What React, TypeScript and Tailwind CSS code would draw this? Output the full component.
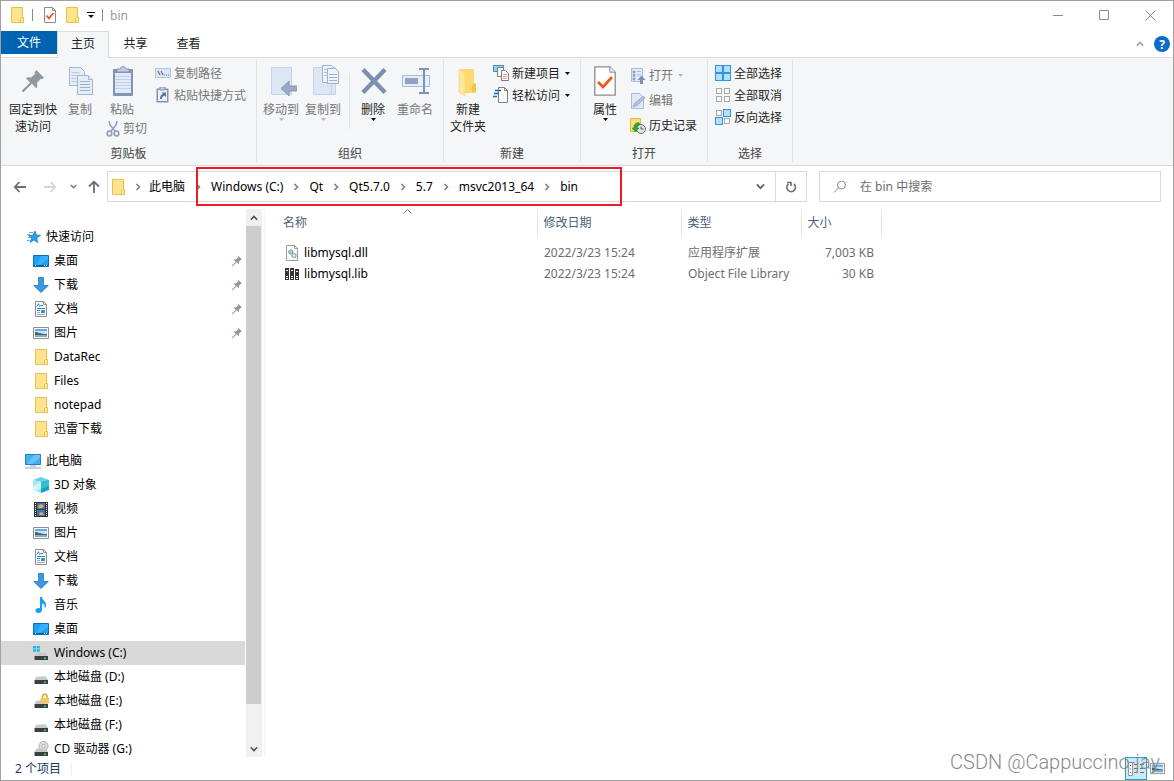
import React from 'react';

type IconProps = { className?: string };

/* ---------- shared icons ---------- */

function FolderIcon({ className = 'w-4 h-4' }: IconProps) {
  return (
    <svg viewBox="0 0 16 16" className={className}>
      <path d="M2.500.5h11v10h1v5h-12z" fill="#ffe48f" stroke="#e8c04a" />
      <path d="M11.500 15.500v-4l1-1h2v5z" fill="#ffe9a6" stroke="#e8c04a" />
    </svg>
  );
}

function PinIcon({ className = 'w-3 h-3' }: IconProps) {
  return (
    <svg viewBox="0 0 20 20" className={className}>
      <path d="M13 0l7 7-2 1.500-1-.5-3.500 4c.7 1.800.5 3.500-.5 4.500l-4-4L1.500 20 0 20 .5 18 7.500 11.500 3.500 7.500c1.200-1 3-1.200 4.500-.5l4-3.500-.5-1.500z" fill="#8f99a3" />
    </svg>
  );
}

function PageCheckIcon({ className = 'w-4 h-4' }: IconProps) {
  return (
    <svg viewBox="0 0 22 30" className={className}>
      <path d="M.8.800h15L21.200 6.200v23H.8z" fill="#fff" stroke="#8c8c8c" strokeWidth="1.300" />
      <path d="M15.800.800v5.400h5.400" fill="#eee" stroke="#8c8c8c" />
      <path d="M4 16l5 5 9-10" fill="none" stroke="#f0591c" strokeWidth="2.800" />
    </svg>
  );
}

function SmallPageCheckIcon() {
  return (
    <svg viewBox="0 0 16 16" className="w-4 h-4">
      <path d="M2.500.5h8l3 3v12h-11z" fill="#fff" stroke="#8c8c8c" />
      <path d="M10.500.5v3h3" fill="none" stroke="#8c8c8c" />
      <path d="M4.500 8.500l2.500 3 4.500-5.500" fill="none" stroke="#e8501c" strokeWidth="1.700" />
    </svg>
  );
}

function Caret({ className = 'text-black' }: IconProps) {
  return (
    <svg viewBox="0 0 5 3" className={`w-[5px] h-[3px] shrink-0 ${className}`}>
      <path d="M0 0h5L2.500 3z" fill="currentColor" />
    </svg>
  );
}

function Chevron({ d, className = 'w-2 h-2' }: IconProps & { d: string }) {
  return (
    <svg viewBox="0 0 8 8" className={className} fill="none" stroke="currentColor" strokeWidth="1.600">
      <path d={d} />
    </svg>
  );
}

const RIGHT = 'M2.500 1l3 3-3 3';
const DOWN = 'M.8 2.200L4 5.500l3.200-3.300';
const UP = 'M.8 5.800L4 2.500l3.200 3.300';

/* ---------- ribbon icons ---------- */

function CopyIcon() {
  return (
    <svg viewBox="0 0 32 32" className="w-8 h-8" fill="#e4ecf7" stroke="#a3b5d1">
      <path d="M5.500 2.500h11l4 4v14h-15z" />
      <path d="M7.500 7.500h8M7.500 10.500h8M7.500 13.500h8M7.500 16.500h8" stroke="#bccbe2" />
      <path d="M13.500 10.500h11l4 4v15h-15z" />
      <path d="M24.500 10.500v4h4" />
      <path d="M16 16.500h10M16 19.500h10M16 22.500h10M16 25.500h10" stroke="#9db0cf" />
    </svg>
  );
}

function PasteIcon() {
  return (
    <svg viewBox="0 0 32 32" className="w-8 h-8">
      <rect x="7" y="4" width="20" height="27" rx="1" fill="#8494b5" />
      <path d="M9 8h16v20H9z" fill="#e2eaf7" />
      <path d="M9 11.500h16M9 14.500h16M9 17.500h16M9 20.500h16M9 23.500h16" stroke="#c3d0e6" />
      <path d="M11 7V4h3.500a2.500 2.500 0 015 0H23v3z" fill="#c6cfdf" stroke="#8494b5" />
    </svg>
  );
}

function ScissorsIcon() {
  return (
    <svg viewBox="0 0 14 16" className="w-[14px] h-4 shrink-0" fill="none" stroke="#8d9dbb">
      <path d="M3 0l1 4 5 6M11 0l-1 4-5 6" strokeWidth="1.500" />
      <ellipse cx="3.500" cy="12.500" rx="2.300" ry="2.500" strokeWidth="1.600" />
      <ellipse cx="10.500" cy="12.500" rx="2.300" ry="2.500" strokeWidth="1.600" />
    </svg>
  );
}

function CopyPathIcon() {
  return (
    <svg viewBox="0 0 16 16" className="w-4 h-4 shrink-0">
      <path d="M.5 3.500h15v9H.5z" fill="#dce7f6" stroke="#b6c5dd" />
      <path d="M3 6l2 4M6 6l2 4M9 10h1M11 10h1M13 10h1" stroke="#62789f" strokeWidth="1.200" />
    </svg>
  );
}

function PasteShortcutIcon() {
  return (
    <svg viewBox="0 0 16 16" className="w-4 h-4 shrink-0">
      <path d="M1.500 1.500h12v14h-12z" fill="#8393b3" />
      <path d="M3 3h9v11H3z" fill="#eaf0fa" />
      <path d="M5 0h5v3H5z" fill="#c8d1e1" stroke="#8393b3" />
      <path d="M5 12c0-3 1-4.500 3-5L6.500 5.500H11V10L9.500 8.500C8 9 6.800 10 7 12z" fill="#5c7196" />
    </svg>
  );
}

function MoveToIcon() {
  return (
    <svg viewBox="0 0 32 32" className="w-8 h-8">
      <path d="M6.500 2.500h20v27h-20z" fill="#dce6f5" stroke="#c6d3e8" />
      <path d="M24.500 16v13" stroke="#c6d3e8" />
      <path d="M16 23.500l8-7.500v5h8v5h-8v5z" fill="#9aaac6" stroke="#8799b9" />
    </svg>
  );
}

function CopyToIcon() {
  return (
    <svg viewBox="0 0 32 32" className="w-8 h-8">
      <path d="M6.500 2.500h22v27h-22z" fill="#dce6f5" stroke="#c6d3e8" />
      <path d="M24.500 20v9" stroke="#c6d3e8" />
      <path d="M15.500.5h9l3 3v14h-12z" fill="#eef3fb" stroke="#9fb1cf" />
      <path d="M17 4.500h7M17 7.500h7M17 10.500h7" stroke="#b3c2db" />
      <path d="M20.500 3.500h8l3 3v12h-11z" fill="#eef3fb" stroke="#9fb1cf" />
      <path d="M22 9.500h8M22 12.500h8M22 15.500h8" stroke="#9fb1cf" />
    </svg>
  );
}

function DeleteIcon() {
  return (
    <svg viewBox="0 0 32 32" className="w-8 h-8">
      <path d="M6 4.500l22 23M28 4.500L6 27.500" stroke="#7d8fb0" strokeWidth="4.500" />
    </svg>
  );
}

function RenameIcon() {
  return (
    <svg viewBox="0 0 32 32" className="w-8 h-8">
      <path d="M3.500 10.500h27v11h-27z" fill="#e6eefa" stroke="#a9bbd8" />
      <path d="M6 13h13v6H6z" fill="#91a3c3" />
      <path d="M20 4h4l1 1 1-1h4M20 28h4l1-1 1 1h4M25 5v22" fill="none" stroke="#8093b5" strokeWidth="2" />
    </svg>
  );
}

function NewFolderIcon() {
  return (
    <svg viewBox="0 0 32 32" className="w-8 h-8">
      <path d="M8 4h14v18h2v6H11z" fill="#ffd96f" />
      <path d="M22 18l2 1v8h-4v-6z" fill="#f4c44c" />
      <path d="M7 4l6 5v22l-6-4z" fill="#ffe79c" stroke="#f6d06b" strokeWidth=".6" />
    </svg>
  );
}

function NewItemIcon() {
  return (
    <svg viewBox="0 0 16 16" className="w-4 h-4 shrink-0">
      <path d="M.5.5h10v6H.5z" fill="#8fd3f2" stroke="#4c8fb5" />
      <path d="M4.500 2.500h6v9h-6z" fill="#fff" stroke="#7d7d7d" />
      <path d="M8.500 5.500h4l3 3v7h-7z" fill="#fff" stroke="#7d7d7d" />
      <path d="M10 9.500h4M10 11.500h4M10 13.500h4" stroke="#e29a8c" />
    </svg>
  );
}

function EasyAccessIcon() {
  return (
    <svg viewBox="0 0 16 16" className="w-4 h-4 shrink-0">
      <path d="M5.500.5h6l3 3v12h-9z" fill="#fff" stroke="#808080" />
      <path d="M11.500.5v3h3" fill="none" stroke="#808080" />
      <path d="M2 3.500h6M1 6.500h5M0 9.500h4" stroke="#1a6fb5" strokeWidth="1.300" />
    </svg>
  );
}

function OpenIcon() {
  return (
    <svg viewBox="0 0 16 16" className="w-4 h-4 shrink-0">
      <path d="M1.500.5h11v13h-11z" fill="#e3ebf8" stroke="#a9bbd8" />
      <path d="M3 3h2v2H3zM3 6.500h2v2H3zM3 10h2v2H3zM6.500 3.500H11M6.500 7H11" fill="#8ea2c5" stroke="#8ea2c5" strokeWidth=".7" />
      <path d="M10 16v-4H7.500L11.500 7.500l4 4.500H13v4z" fill="#7d91b5" />
    </svg>
  );
}

function EditIcon() {
  return (
    <svg viewBox="0 0 16 16" className="w-4 h-4 shrink-0">
      <path d="M1.500.5h8l4 4v11h-12z" fill="#dfe8f6" stroke="#a9bbd8" />
      <path d="M3 14l2-4 8.500-7 1.500 2-8 7.500z" fill="#b4c3dc" stroke="#8ea2c5" strokeWidth=".8" />
    </svg>
  );
}

function HistoryIcon() {
  return (
    <svg viewBox="0 0 16 16" className="w-4 h-4 shrink-0">
      <path d="M.5.5h10v13h-10z" fill="#ffe07a" stroke="#e6b93c" />
      <circle cx="11" cy="11" r="4.500" fill="#e4e4e4" stroke="#6f6f6f" />
      <path d="M11 8.500V11h2.500" fill="none" stroke="#555" />
      <path d="M9 4.500C5 5 3.500 7 4 10H2l3.500 4L9 10H7c0-2 .8-3 3-3.500z" fill="#27a844" stroke="#14822e" strokeWidth=".5" />
    </svg>
  );
}

const SQUARES = [
  [0, 0],
  [8, 0],
  [0, 8],
  [8, 8],
];

function SelectionIcon({ on }: { on: boolean[] }) {
  return (
    <svg viewBox="0 0 16 16" className="w-4 h-4 shrink-0">
      {SQUARES.map(([x, y], i) =>
        on[i] ? (
          <rect key={i} x={x + 0.5} y={y + 0.5} width="7" height="7" fill="#b5defb" stroke="#2e95e6" />
        ) : (
          <rect key={i} x={x + 1.5} y={y + 1.5} width="5" height="5" fill="#fff" stroke="#a8a8a8" />
        )
      )}
    </svg>
  );
}

/* ---------- navigation icons ---------- */

function StarIcon() {
  return (
    <svg viewBox="0 0 16 16" className="w-4 h-4">
      <path d="M10 2l1.200 4 4.300.300-3.700 2.600.8 4.600-3.600-2.500-3.800 2.500 1.500-4.500L3.500 6.500l4.300-.2z" fill="#2f9be8" stroke="#1b7fc9" strokeWidth=".8" />
      <path d="M4 3.500h4M2 5.500h3M3 8.500h3M2 11.500h3" stroke="#5bb4ef" />
    </svg>
  );
}

function DesktopIcon() {
  return (
    <svg viewBox="0 0 16 16" className="w-4 h-4">
      <path d="M.5 2.500h15v11H.5z" fill="#1ba1fb" stroke="#0b6fae" />
      <path d="M8 3h7v3L6 12.500H3z" fill="#46b5ff" opacity=".7" />
      <path d="M1 12.500h14" stroke="#0a5f99" />
      <path d="M2 12.500h1M11 12.500h1M13 12.500h1" stroke="#fff" />
    </svg>
  );
}

function DownloadIcon() {
  return (
    <svg viewBox="0 0 16 16" className="w-4 h-4">
      <path d="M5.500.5h5v8h4.800L8 15.500.7 8.500h4.800z" fill="#3c96e4" stroke="#2778c4" strokeWidth=".8" />
    </svg>
  );
}

function DocumentIcon() {
  return (
    <svg viewBox="0 0 16 16" className="w-4 h-4">
      <path d="M2.500.5h8l3 3v12h-11z" fill="#fff" stroke="#8c8c8c" />
      <path d="M10.500.5v3h3" fill="none" stroke="#8c8c8c" />
      <path d="M4 5.500l1.500-3 1 3M7 4.500h3M4 7.500h8M4 9.500h3" fill="none" stroke="#2a86d1" />
      <path d="M8 9h4v3H8z" fill="#3d8fc4" />
      <path d="M4 11.500h3M4 13.500h8" stroke="#9aa7b3" />
    </svg>
  );
}

function PictureIcon({ className = 'w-4 h-4' }: IconProps) {
  return (
    <svg viewBox="0 0 16 16" className={className}>
      <path d="M.5 2.500h15v11H.5z" fill="#fff" stroke="#8f8f8f" />
      <path d="M2 4h12v8H2z" fill="#c6e2f8" />
      <path d="M2 4h12v2H2z" fill="#6aa6e6" />
      <path d="M2 7c3 0 5 2 12 2v1H2z" fill="#3d6b63" />
      <path d="M2 10h12v2H2z" fill="#7fa9c4" />
    </svg>
  );
}

function ComputerIcon() {
  return (
    <svg viewBox="0 0 16 16" className="w-4 h-4">
      <path d="M.5 1.500h15v10H.5z" fill="#3fb1f7" stroke="#2b7fb8" />
      <path d="M9 2h6v2L7 11H2z" fill="#7accff" opacity=".7" />
      <path d="M5 13h6M0 15h16" stroke="#8ea3b5" strokeWidth="1.200" />
    </svg>
  );
}

function CubeIcon() {
  return (
    <svg viewBox="0 0 16 16" className="w-4 h-4">
      <path d="M0 3l8-3 8 3-8 2z" fill="#5fd6e6" />
      <path d="M0 3l8 2v11l-8-3z" fill="#9ee9ef" />
      <path d="M8 5l8-2v10l-8 3z" fill="#0ea5c4" />
      <path d="M8 5l8-2v6L8 12z" fill="#37bdd3" />
      <path d="M0 9l8-4v6l-5 3-3-1z" fill="#d4f5f5" />
    </svg>
  );
}

function VideoIcon() {
  return (
    <svg viewBox="0 0 16 16" className="w-4 h-4">
      <path d="M1 1h14v15H1z" fill="#333" />
      <path d="M2.500 2v14M13.500 2v14" stroke="#fff" strokeDasharray="1 1" />
      <path d="M4 2h8v6H4zM4 9h8v6H4z" fill="#3f6fd0" />
      <path d="M5 5l3-2 3 2-2 2H6zM6 12l3-1 2 3H7z" fill="#e8b23a" />
      <path d="M4 7h3v1H4zM8 9h3v1H8z" fill="#4f9a4a" />
    </svg>
  );
}

function MusicIcon() {
  return (
    <svg viewBox="0 0 16 16" className="w-4 h-4">
      <path d="M7 0h2c0 3 4 4 4 8 0 1.500-.5 2.500-1.200 3.500C12 8.500 11 7 9 6.500V13c0 1.800-1.500 3-3.500 3S2.300 15 2.300 13.600 4 11 5.500 11c.6 0 1 0 1.500.3z" fill="#16a0f5" />
    </svg>
  );
}

function DriveIcon({ kind }: { kind?: 'windows' | 'locked' | 'cd' }) {
  return (
    <svg viewBox="0 0 16 16" className="w-4 h-4">
      {kind === 'cd' && (
        <>
          <circle cx="10.500" cy="5" r="4.500" fill="#e3e3e3" stroke="#9a9a9a" strokeWidth=".8" />
          <circle cx="10.500" cy="5" r="1.700" fill="#fff" stroke="#9a9a9a" strokeWidth=".8" />
        </>
      )}
      <path d="M3.500 7.500h9.500l2 3.500H1.500z" fill="#c9c9c9" />
      <path d="M1.500 11h13.500v4H1.500z" fill="#3a3f42" />
      <path d="M11 12.500h2v1.500h-2z" fill="#3ddc4b" />
      {kind === 'windows' && <path d="M0 1h3v2.500H0zM3.800 1h3v2.500h-3zM0 4.300h3v2.500H0zM3.800 4.300h3v2.500h-3z" fill="#12b5ee" />}
      {kind === 'locked' && (
        <>
          <path d="M9.500 5V3.500a2.300 2.300 0 014.600 0V5" fill="none" stroke="#d9a93a" strokeWidth="1.500" />
          <path d="M7.500 5H16v5H7.500z" fill="#f6c95a" />
        </>
      )}
    </svg>
  );
}

/* ---------- ribbon ---------- */

function RibbonGroup({ label, className, children }: { label: string; className: string; children: React.ReactNode }) {
  return (
    <section aria-label={label} className={`flex flex-col shrink-0 border-r border-[#e1e2e4] pt-[2px] ${className}`}>
      <div className="flex flex-1 items-start">{children}</div>
      <div className="text-center text-[#444]">{label}</div>
    </section>
  );
}

interface BigButtonProps {
  icon: React.ReactNode;
  lines: string[];
  disabled?: boolean;
  caret?: boolean;
  className?: string;
}

function BigButton({ icon, lines, disabled, caret, className = 'w-[42px]' }: BigButtonProps) {
  return (
    <button
      type="button"
      disabled={disabled}
      className={`flex flex-col items-center shrink-0 pt-[3px] whitespace-nowrap ${disabled ? 'text-[#767676]' : 'text-[#1e1e1e]'} ${className}`}
    >
      <span className="flex items-center justify-center w-8 h-8 mb-1">{icon}</span>
      {lines.map((line) => (
        <span key={line}>{line}</span>
      ))}
      {caret && <Caret className={disabled ? 'text-[#b5b5b5]' : 'text-black'} />}
    </button>
  );
}

interface SmallButtonProps {
  icon: React.ReactNode;
  label: string;
  disabled?: boolean;
  caret?: boolean;
  className?: string;
}

function SmallButton({ icon, label, disabled, caret, className = 'h-[22px] gap-[3px]' }: SmallButtonProps) {
  return (
    <button
      type="button"
      disabled={disabled}
      className={`flex items-center whitespace-nowrap ${disabled ? 'text-[#767676]' : 'text-[#1e1e1e]'} ${className}`}
    >
      {icon}
      <span>{label}</span>
      {caret && (
        <span className="pl-[2px]">
          <Caret className={disabled ? 'text-[#b5b5b5]' : 'text-black'} />
        </span>
      )}
    </button>
  );
}

function Ribbon() {
  return (
    <div className="flex shrink-0 h-[109px] bg-[#f5f6f7] border-y border-[#dadbdc] pt-[2px] pb-[3px]">
      <RibbonGroup label="剪贴板" className="w-[256px]">
        <BigButton icon={<PinIcon className="w-[22px] h-[22px]" />} lines={['固定到快', '速访问']} className="ml-[7px] w-[50px]" />
        <BigButton icon={<CopyIcon />} lines={['复制']} disabled className="ml-[2px] w-10" />
        <div className="flex flex-col items-start w-[51px]">
          <BigButton icon={<PasteIcon />} lines={['粘贴']} disabled className="ml-[2px] w-10" />
          <SmallButton icon={<ScissorsIcon />} label="剪切" disabled className="ml-[6px] h-[21px] gap-[3px]" />
        </div>
        <div className="pl-1">
          <SmallButton icon={<CopyPathIcon />} label="复制路径" disabled />
          <SmallButton icon={<PasteShortcutIcon />} label="粘贴快捷方式" disabled />
        </div>
      </RibbonGroup>

      <RibbonGroup label="组织" className="w-[187px]">
        <BigButton icon={<MoveToIcon />} lines={['移动到']} disabled caret className="ml-[3px] w-[42px]" />
        <BigButton icon={<CopyToIcon />} lines={['复制到']} disabled caret />
        <div className="w-px h-[56px] mt-[11px] ml-[5px] mr-[2px] bg-[#e1e2e4]" />
        <BigButton icon={<DeleteIcon />} lines={['删除']} caret />
        <BigButton icon={<RenameIcon />} lines={['重命名']} disabled />
      </RibbonGroup>

      <RibbonGroup label="新建" className="w-[137px]">
        <BigButton icon={<NewFolderIcon />} lines={['新建', '文件夹']} className="ml-[3px] w-[42px]" />
        <div className="pl-1">
          <SmallButton icon={<NewItemIcon />} label="新建项目" caret />
          <SmallButton icon={<EasyAccessIcon />} label="轻松访问" caret />
        </div>
      </RibbonGroup>

      <RibbonGroup label="打开" className="w-[127px]">
        <BigButton icon={<PageCheckIcon className="w-[22px] h-[30px]" />} lines={['属性']} caret className="ml-[3px] w-[42px]" />
        <div className="pl-1 pt-[1px]">
          <SmallButton icon={<OpenIcon />} label="打开" disabled caret className="h-[25px] gap-[3px]" />
          <SmallButton icon={<EditIcon />} label="编辑" disabled className="h-[25px] gap-[3px]" />
          <SmallButton icon={<HistoryIcon />} label="历史记录" className="h-[25px] gap-[3px]" />
        </div>
      </RibbonGroup>

      <RibbonGroup label="选择" className="w-[85px]">
        <div className="pl-[7px]">
          <SmallButton icon={<SelectionIcon on={[true, true, true, true]} />} label="全部选择" />
          <SmallButton icon={<SelectionIcon on={[false, false, false, false]} />} label="全部取消" />
          <SmallButton icon={<SelectionIcon on={[false, true, true, false]} />} label="反向选择" />
        </div>
      </RibbonGroup>
    </div>
  );
}

/* ---------- window chrome ---------- */

function TitleBar() {
  return (
    <header className="flex items-center shrink-0 h-[30px] pb-[2px] pl-[8px]">
      <FolderIcon />
      <div className="w-px h-3 ml-[7px] bg-[#8a8a8a]" />
      <button type="button" aria-label="属性" className="ml-[9px]">
        <SmallPageCheckIcon />
      </button>
      <button type="button" aria-label="新建文件夹" className="ml-[6px]">
        <FolderIcon />
      </button>
      <button type="button" aria-label="自定义快速访问工具栏" className="ml-[7px]">
        <svg viewBox="0 0 8 8" className="w-2 h-2">
          <path d="M0 1.500h8" stroke="#111" />
          <path d="M1 4h6L4 7z" fill="#111" />
        </svg>
      </button>
      <div className="w-px h-3 ml-[7px] bg-[#8a8a8a]" />
      <h1 className="flex-1 pl-[7px] text-[#999]">bin</h1>
      <div className="flex self-stretch text-[#8a8a8a]">
        <button type="button" aria-label="最小化" className="flex items-center justify-center w-[46px]">
          <svg viewBox="0 0 11 11" className="w-[11px] h-[11px]" stroke="currentColor">
            <path d="M0 5.500h10" />
          </svg>
        </button>
        <button type="button" aria-label="最大化" className="flex items-center justify-center w-[46px]">
          <svg viewBox="0 0 11 11" className="w-[11px] h-[11px]" stroke="currentColor" fill="none">
            <path d="M.5.5h9v9H.5z" />
          </svg>
        </button>
        <button type="button" aria-label="关闭" className="flex items-center justify-center w-[46px]">
          <svg viewBox="0 0 11 11" className="w-[11px] h-[11px]" stroke="currentColor">
            <path d="M.5.5l10 10M10.500.5l-10 10" />
          </svg>
        </button>
      </div>
    </header>
  );
}

function TabBar() {
  return (
    <nav className="flex items-start shrink-0 h-[26px] text-[#222]">
      <button type="button" className="w-14 h-[23px] bg-[#0063b1] text-white">文件</button>
      <button type="button" className="relative z-10 w-[52px] h-[27px] pb-[3px] bg-[#f5f6f7] border-x border-t border-[#dadbdc]">主页</button>
      <button type="button" className="w-[53px] h-[24px]">共享</button>
      <button type="button" className="w-[53px] h-[24px]">查看</button>
      <div className="flex items-center ml-auto h-[26px] pr-[3px] gap-[10px]">
        <button type="button" aria-label="最小化功能区" className="text-[#a0a0a0]">
          <Chevron d={UP} />
        </button>
        <button type="button" aria-label="帮助" className="flex items-center justify-center w-4 h-4 rounded-full bg-[#0a6cc8] text-white font-bold">
          ?
        </button>
      </div>
    </nav>
  );
}

const CRUMBS = ['此电脑', 'Windows (C:)', 'Qt', 'Qt5.7.0', '5.7', 'msvc2013_64', 'bin'];

function AddressRow() {
  return (
    <div className="flex items-center shrink-0 h-[43px] pb-[2px] pr-3">
      <div className="flex items-center shrink-0 w-[106px] pl-3">
        <button type="button" aria-label="后退">
          <svg viewBox="0 0 14 14" className="w-[14px] h-[14px]" fill="none" stroke="#6e6e6e" strokeWidth="1.800">
            <path d="M13 7H2M6.500 2L1.800 7l4.700 5" />
          </svg>
        </button>
        <button type="button" aria-label="前进" className="ml-4">
          <svg viewBox="0 0 14 14" className="w-[14px] h-[14px]" fill="none" stroke="#d5d5d5" strokeWidth="1.800">
            <path d="M1 7h11M7.500 2l4.700 5-4.700 5" />
          </svg>
        </button>
        <button type="button" aria-label="最近浏览的位置" className="ml-[13px] text-[#777]">
          <Chevron d={DOWN} className="w-[7px] h-[7px]" />
        </button>
        <button type="button" aria-label="上移" className="ml-[10px]">
          <svg viewBox="0 0 14 14" className="w-[14px] h-[14px]" fill="none" stroke="#6e6e6e" strokeWidth="1.800">
            <path d="M7 13V2M2 6.500L7 1.800l5 4.700" />
          </svg>
        </button>
      </div>

      <div className="flex items-center flex-1 h-[31px] border border-[#d9d9d9]">
        <div className="relative flex items-center whitespace-nowrap pl-[2px] pr-11">
          <FolderIcon className="w-4 h-4 shrink-0" />
          {CRUMBS.map((crumb, i) => (
            <React.Fragment key={crumb}>
              <span className={`flex justify-center text-[#808080] ${i === 0 ? 'w-[23px]' : 'w-[26px]'}`}>
                <Chevron d={RIGHT} />
              </span>
              <a href="#" className="text-black">{crumb}</a>
            </React.Fragment>
          ))}
          <div className="absolute left-[88px] right-0 -inset-y-[11px] border-2 border-[#ed1c24]" />
        </div>
        <button type="button" aria-label="以前的位置" className="flex items-center justify-center w-[30px] h-full ml-auto text-[#666]">
          <Chevron d={DOWN} className="w-[9px] h-[9px]" />
        </button>
        <button type="button" aria-label="刷新" className="flex items-center justify-center w-[31px] h-full border-l border-[#d9d9d9]">
          <svg viewBox="0 0 12 12" className="w-3 h-3" fill="none" stroke="#6e6e6e" strokeWidth="1.600">
            <path d="M3.500 3A4.300 4.300 0 108.800 3" />
            <path d="M2 1.500h4V5" />
          </svg>
        </button>
      </div>

      <label className="flex items-center w-[342px] h-[31px] ml-3 pl-[13px] gap-[13px] border border-[#d9d9d9]">
        <svg viewBox="0 0 14 14" className="w-[14px] h-[14px] shrink-0" fill="none" stroke="#8a8a8a">
          <circle cx="8.500" cy="5" r="4" />
          <path d="M5.500 8L1 12.500" />
        </svg>
        <input type="search" aria-label="搜索" placeholder="在 bin 中搜索" className="flex-1 min-w-0 outline-none placeholder:text-[#6d6d6d] placeholder:opacity-100" />
      </label>
    </div>
  );
}

/* ---------- body ---------- */

interface NavItem {
  name: string;
  icon: React.ReactNode;
  pinned?: boolean;
  selected?: boolean;
}

const QUICK_ACCESS: NavItem[] = [
  { name: '桌面', icon: <DesktopIcon />, pinned: true },
  { name: '下载', icon: <DownloadIcon />, pinned: true },
  { name: '文档', icon: <DocumentIcon />, pinned: true },
  { name: '图片', icon: <PictureIcon />, pinned: true },
  { name: 'DataRec', icon: <FolderIcon /> },
  { name: 'Files', icon: <FolderIcon /> },
  { name: 'notepad', icon: <FolderIcon /> },
  { name: '迅雷下载', icon: <FolderIcon /> },
];

const THIS_PC: NavItem[] = [
  { name: '3D 对象', icon: <CubeIcon /> },
  { name: '视频', icon: <VideoIcon /> },
  { name: '图片', icon: <PictureIcon /> },
  { name: '文档', icon: <DocumentIcon /> },
  { name: '下载', icon: <DownloadIcon /> },
  { name: '音乐', icon: <MusicIcon /> },
  { name: '桌面', icon: <DesktopIcon /> },
  { name: 'Windows (C:)', icon: <DriveIcon kind="windows" />, selected: true },
  { name: '本地磁盘 (D:)', icon: <DriveIcon /> },
  { name: '本地磁盘 (E:)', icon: <DriveIcon kind="locked" /> },
  { name: '本地磁盘 (F:)', icon: <DriveIcon /> },
  { name: 'CD 驱动器 (G:)', icon: <DriveIcon kind="cd" /> },
];

function NavSection({ title, icon, items }: { title: string; icon: React.ReactNode; items: NavItem[] }) {
  return (
    <div className="mb-2">
      <a href="#" className="flex items-center h-6 pl-6 gap-[5px]">
        {icon}
        <span className="pb-[2px]">{title}</span>
      </a>
      <ul>
        {items.map((item) => (
          <li key={item.name}>
            <a href="#" className={`flex items-center h-6 pl-8 pr-[3px] gap-[5px] ${item.selected ? 'bg-[#d9d9d9]' : ''}`}>
              {item.icon}
              <span className="flex-1 pb-[2px]">{item.name}</span>
              {item.pinned && <PinIcon className="w-[10px] h-[10px]" />}
            </a>
          </li>
        ))}
      </ul>
    </div>
  );
}

function NavPane() {
  return (
    <aside className="flex shrink-0 w-[264px] border-r border-[#f3f3f3]">
      <div className="w-[244px] overflow-hidden pt-4 text-black">
        <NavSection title="快速访问" icon={<StarIcon />} items={QUICK_ACCESS} />
        <NavSection title="此电脑" icon={<ComputerIcon />} items={THIS_PC} />
      </div>
      <div className="flex flex-col w-4 ml-px bg-[#f0f0f0] text-[#505050]">
        <button type="button" aria-label="向上滚动" className="flex items-center justify-center h-[17px]">
          <Chevron d={UP} />
        </button>
        <div className="flex-1 w-[15px] mb-9 bg-[#cdcdcd]" />
        <button type="button" aria-label="向下滚动" className="flex items-center justify-center h-[17px]">
          <Chevron d={DOWN} />
        </button>
      </div>
    </aside>
  );
}

function DllIcon() {
  return (
    <svg viewBox="0 0 16 16" className="w-4 h-4">
      <path d="M2.500.5h8l3 3v12h-11z" fill="#fbfbfb" stroke="#9b9b9b" />
      <path d="M10.500.5v3h3" fill="none" stroke="#9b9b9b" />
      <circle cx="6.800" cy="7" r="2" fill="#e8e8e8" stroke="#8e9aa3" strokeWidth="1.200" />
      <circle cx="6.800" cy="7" r=".8" fill="#8e9aa3" />
      <circle cx="10" cy="10.500" r="2" fill="#e3f1fa" stroke="#79aed0" strokeWidth="1.200" />
    </svg>
  );
}

function LibIcon() {
  return (
    <svg viewBox="0 0 16 16" className="w-4 h-4">
      <path d="M1 2h4v12H1zM6 2h4v12H6zM11 3h4v11h-4z" fill="#333" />
      <path d="M2 4.500h2M7 4.500h2M12 5.500h2M2 10.500h2M7 10.500h2M12 10.500h2M2 12.500h2M7 12.500h2M12 12.500h2" stroke="#fff" />
    </svg>
  );
}

const FILES = [
  { name: 'libmysql.dll', icon: <DllIcon />, date: '2022/3/23 15:24', type: '应用程序扩展', size: '7,003 KB' },
  { name: 'libmysql.lib', icon: <LibIcon />, date: '2022/3/23 15:24', type: 'Object File Library', size: '30 KB' },
];

function FileList() {
  return (
    <main className="relative flex-1 min-w-0">
      <table className="table-fixed w-[616px] text-left">
        <thead className="text-[#4c607a]">
          <tr className="h-[27px]">
            <th className="w-[272px] pl-[18px] font-normal border-r border-[#e5e5e5]">名称</th>
            <th className="w-[144px] pl-[6px] font-normal border-r border-[#e5e5e5]">修改日期</th>
            <th className="w-[120px] pl-[6px] font-normal border-r border-[#e5e5e5]">类型</th>
            <th className="w-[80px] pl-[6px] font-normal border-r border-[#e5e5e5]">大小</th>
          </tr>
        </thead>
        <tbody className="text-[#6d6d6d] before:block before:h-[6px]">
          {FILES.map((file) => (
            <tr key={file.name} className="h-[21px]">
              <td className="pl-[19px]">
                <span className="flex items-center gap-1 text-black">
                  {file.icon}
                  {file.name}
                </span>
              </td>
              <td className="pl-[7px]">{file.date}</td>
              <td className="pl-[7px] whitespace-nowrap">{file.type}</td>
              <td className="pr-[7px] text-right">{file.size}</td>
            </tr>
          ))}
        </tbody>
      </table>
      <span className="absolute top-0 left-[138px] text-[#777]">
        <svg viewBox="0 0 9 5" className="w-[9px] h-[5px]" fill="none" stroke="currentColor">
          <path d="M.5 4.500l4-4 4 4" />
        </svg>
      </span>
    </main>
  );
}

function StatusBar() {
  return (
    <footer className="relative flex items-center shrink-0 h-[23px] pl-[14px] pr-2">
      <span className="text-[#1e395b]">2 个项目</span>
      <div className="w-px h-3 ml-[10px] bg-[#ececec]" />
      <button type="button" aria-label="详细信息" className="flex items-center justify-center w-[22px] h-[23px] ml-auto bg-[#cce8f6] border border-[#26a0da]">
        <svg viewBox="0 0 16 14" className="w-4 h-[14px]">
          <path d="M.5.5h4v13h-4z" fill="#fff" stroke="#999" />
          <path d="M2 3.500h1M2 7h1M2 10.500h1" stroke="#c23b2e" />
          <path d="M6 2.500h4M12 2.500h4M6 6.500h4M12 6.500h4M6 10.500h4M12 10.500h4" stroke="#5f6f7d" />
        </svg>
      </button>
      <button type="button" aria-label="大图标" className="ml-[3px]">
        <PictureIcon className="w-[15px] h-[15px]" />
      </button>
      <div className="absolute right-[13px] bottom-[4px] font-[Roboto,'Liberation_Sans',sans-serif] font-light text-[20px] leading-[28px] text-[#8a8a8a] whitespace-nowrap">
        CSDN @Cappuccino-jay
      </div>
    </footer>
  );
}

export default function App() {
  return (
    <div className="flex flex-col h-screen bg-white border border-[#a0a0a0] font-['Noto_Sans','Noto_Sans_CJK_SC',sans-serif] text-[12px] leading-[17px] overflow-hidden">
      <TitleBar />
      <TabBar />
      <Ribbon />
      <AddressRow />
      <div className="flex flex-1 min-h-0">
        <NavPane />
        <FileList />
      </div>
      <StatusBar />
    </div>
  );
}
